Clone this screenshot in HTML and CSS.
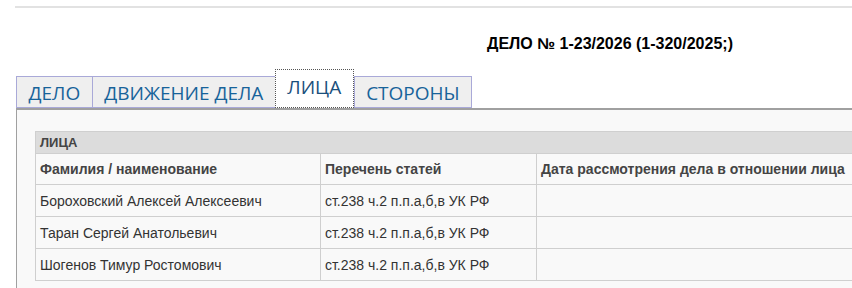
FILE: index.html
```html
<!DOCTYPE html>
<html>
<head>
    <title>Дело № 1-23/2026</title>
    <link rel="stylesheet" href="styles.css">
</head>
<body>
    <div class="page">
        <h2 class="case-title">ДЕЛО № 1-23/2026 (1-320/2025;)</h2>

        <ul class="tabs">
            <li class="tab">ДЕЛО</li>
            <li class="tab">ДВИЖЕНИЕ ДЕЛА</li>
            <li class="tab tab-active">ЛИЦА</li>
            <li class="tab">СТОРОНЫ</li>
        </ul>

        <div class="panel">
            <table class="persons">
                <tr class="caption-row">
                    <td colspan="3">ЛИЦА</td>
                </tr>
                <tr class="head-row">
                    <th class="col-name">Фамилия / наименование</th>
                    <th class="col-articles">Перечень статей</th>
                    <th>Дата рассмотрения дела в отношении лица</th>
                </tr>
                <tr>
                    <td>Бороховский Алексей Алексеевич</td>
                    <td>ст.238 ч.2 п.п.а,б,в УК РФ</td>
                    <td></td>
                </tr>
                <tr>
                    <td>Таран Сергей Анатольевич</td>
                    <td>ст.238 ч.2 п.п.а,б,в УК РФ</td>
                    <td></td>
                </tr>
                <tr>
                    <td>Шогенов Тимур Ростомович</td>
                    <td>ст.238 ч.2 п.п.а,б,в УК РФ</td>
                    <td></td>
                </tr>
            </table>
        </div>
    </div>
</body>
</html>
```

FILE: styles.css
```css
body {
    margin: 0;
    overflow: hidden;
    background-color: #fff;
    font-family: "Liberation Sans", Arial, sans-serif;
}

.page {
    width: 1190px;
    margin: 6px 0 0 15px;
    border-top: 2px solid #e2e2e2;
}

.case-title {
    margin: 27px 0 0 0;
    font-size: 16px;
    line-height: 18px;
    text-align: center;
    color: #000;
}

.tabs {
    display: flex;
    align-items: flex-end;
    list-style: none;
    margin: 16px 0 0 1px;
    padding: 0;
}

.tab {
    height: 30px;
    overflow: hidden;
    padding: 0 11.5px;
    border: 1px solid #a9a9d8;
    margin-right: -1px;
    background-color: #efefef;
    font-family: "Open Sans", sans-serif;
    font-size: 19px;
    line-height: 33px;
    color: #17639a;
}

.tab-active {
    height: 37px;
    line-height: 35px;
    margin-right: 0;
    border: 1px dotted #555;
    background-color: #fff;
    color: #1a4f7c;
}

.panel {
    margin-left: 1px;
    padding: 21px 0 40px 18px;
    border-top: 2px solid #a0a0a0;
    border-left: 1px solid #a0a0a0;
    background-color: #f9f9f9;
}

.persons {
    width: 1150px;
    border-collapse: collapse;
    font-size: 14px;
    color: #333;
}

.persons td,
.persons th {
    height: 31px;
    padding: 0 4px;
    border: 1px solid #cfcfcf;
    text-align: left;
}

.persons th {
    height: 30px;
    color: #444;
}

.caption-row td {
    height: 21px;
    background-color: #dcdcdc;
    font-size: 13px;
    font-weight: bold;
    color: #444;
}

.col-name {
    width: 276px;
}

.col-articles {
    width: 207px;
}
```
